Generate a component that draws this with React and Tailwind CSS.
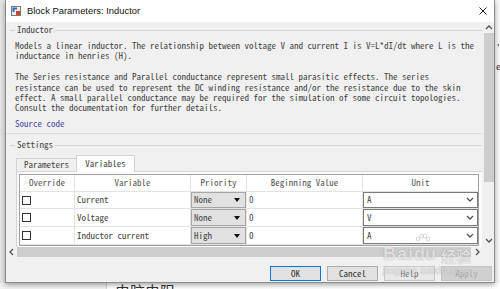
import React from 'react'

function Chevron({ dir = 'down', className = '' }) {
  const pts = {
    down: '1,2 4,5 7,2',
    up: '1,5 4,2 7,5',
    left: '5,1 2,4 5,7',
    right: '2,1 5,4 2,7',
  }[dir]
  return (
    <svg width="8" height="8" viewBox="0 0 8 8" className={className}>
      <polyline points={pts} fill="none" stroke="#505050" strokeWidth="1.3" />
    </svg>
  )
}

function GroupHeader({ title }) {
  return (
    <div className="flex items-center h-[10px]">
      <span className="ml-[4px] w-[5px] h-px bg-[#d6d6d6]" />
      <span className="px-[2px] leading-[10px]">{title}</span>
      <span className="flex-1 mr-[2px] h-px bg-[#d6d6d6]" />
    </div>
  )
}

function Checkbox() {
  return <span className="block w-[9px] h-[9px] border border-[#333] bg-white" />
}

function PriorityBox({ value }) {
  return (
    <div className="h-full w-full flex items-center justify-between border border-[#a6a6a6] bg-[#e1e1e1] pl-[2px] pr-[5px]">
      <span>{value}</span>
      <svg width="6" height="4" viewBox="0 0 6 4">
        <polygon points="0,0 6,0 3,4" fill="#111" />
      </svg>
    </div>
  )
}

function UnitBox({ value }) {
  return (
    <div className="h-full w-full flex items-center justify-between border border-[#7a7a7a] bg-white pl-[3px] pr-[3px]">
      <span>{value}</span>
      <Chevron dir="down" />
    </div>
  )
}

const rows = [
  { name: 'Current', prio: 'None', unit: 'A', h: 'h-[17px]' },
  { name: 'Voltage', prio: 'None', unit: 'V', h: 'h-[18px]' },
  { name: 'Inductor current', prio: 'High', unit: 'A', h: 'h-[18px]' },
]

function VarTable() {
  const cols = 'grid grid-cols-[55px_116px_56px_116px_115px]'
  return (
    <div className="w-[460px] border border-[#a0a0a0] bg-white">
      <div className={`${cols} h-[17px] border-b border-[#e3e3e3] text-[#555]`}>
        {['Override', 'Variable', 'Priority', 'Beginning Value', 'Unit'].map((h, i) => (
          <div key={h} className={`flex items-center justify-center ${i < 4 ? 'border-r border-[#e3e3e3]' : ''}`}>
            {h}
          </div>
        ))}
      </div>
      {rows.map(r => (
        <div key={r.name} className={`${cols} ${r.h} border-b border-[#e3e3e3]`}>
          <div className="flex items-center pl-[2px] border-r border-[#e3e3e3]">
            <Checkbox />
          </div>
          <div className="flex items-center pl-[2px] border-r border-[#e3e3e3]">{r.name}</div>
          <div className="border-r border-[#e3e3e3]">
            <PriorityBox value={r.prio} />
          </div>
          <div className="flex items-center pl-[2px] border-r border-[#e3e3e3]">0</div>
          <div>
            <UnitBox value={r.unit} />
          </div>
        </div>
      ))}
    </div>
  )
}

function Viewport() {
  return (
    <div className="w-[478px] h-full overflow-hidden pt-[3px]">
      <GroupHeader title="Inductor" />
      <div className="mt-[6px] pl-[9px] whitespace-nowrap leading-[10.4px]">
        <p>Models a linear inductor. The relationship between voltage V and current I is V=L*dI/dt where L is the</p>
        <p>inductance in henries (H).</p>
        <p className="mt-[10.4px]">The Series resistance and Parallel conductance represent small parasitic effects. The series</p>
        <p>resistance can be used to represent the DC winding resistance and/or the resistance due to the skin</p>
        <p>effect. A small parallel conductance may be required for the simulation of some circuit topologies.</p>
        <p>Consult the documentation for further details.</p>
      </div>
      <div className="mt-[5px] pl-[9px] leading-[10.4px] text-[#4a4aa8]">Source code</div>
      <div className="mt-[4px] mr-[2px] h-px bg-[#dcdcdc]" />
      <div className="mt-[6px]">
        <GroupHeader title="Settings" />
      </div>
      <div className="mt-[5px] flex items-end h-[17px] pl-[10px] -mb-px relative z-10">
        <div className="mb-px h-[13px] w-[60px] border-t border-l border-[#d4d4d4] bg-[#f0f0f0] flex items-center justify-center">
          Parameters
        </div>
        <div className="h-[17px] w-[59px] border-t border-x border-[#d4d4d4] bg-white flex items-center justify-center">
          Variables
        </div>
      </div>
      <div className="ml-[10px] mr-[2px] border-t border-l border-[#d4d4d4] bg-[#fbfbfb] pl-[2px] pt-[2px] h-[90px]">
        <VarTable />
      </div>
    </div>
  )
}

function VScroll() {
  return (
    <div className="w-[10px] h-full bg-[#f0f0f0] flex flex-col items-center">
      <div className="h-[11px] flex items-center">
        <Chevron dir="up" />
      </div>
      <div className="w-full h-[149px] bg-[#cdcdcd]" />
      <div className="flex-1" />
      <div className="h-[12px] flex items-center">
        <Chevron dir="down" />
      </div>
    </div>
  )
}

function HScroll() {
  return (
    <div className="w-[478px] h-full bg-[#f0f0f0] flex items-center">
      <div className="w-[11px] flex justify-center">
        <Chevron dir="left" />
      </div>
      <div className="w-[454px] h-full bg-[#cdcdcd]" />
      <div className="flex-1 flex justify-center">
        <Chevron dir="right" />
      </div>
    </div>
  )
}

function Button({ children, variant }) {
  const styles = {
    ok: 'border-[#0078d7] bg-[#e1e1e1] text-[#333]',
    normal: 'border-[#adadad] bg-[#e1e1e1] text-[#333]',
    help: 'border-[#c6c6c6] bg-[#e8e8e8] text-[#777]',
    off: 'border-[#c4c4c4] bg-[#d0d0d0] text-[#a9a9a9]',
  }[variant]
  return (
    <div className={`w-[51px] h-[15px] border flex items-center justify-center ${styles}`}>
      {children}
    </div>
  )
}

function AppIcon() {
  return (
    <svg width="10" height="10" viewBox="0 0 10 10">
      <rect x="0.5" y="0.5" width="9" height="9" fill="#ececec" stroke="#7a7a7a" />
      <polygon points="1.5,1.5 6,1.5 6,3.5 3.5,3.5 3.5,6 1.5,6" fill="#2f6fc0" />
      <rect x="5" y="5" width="4" height="4" fill="#d2402a" />
    </svg>
  )
}

function Dialog() {
  return (
    <div className="relative z-10 w-[490px] flex flex-col border-x border-b border-[#8c8c8c] bg-[#f0f0f0] shadow-[0_2px_5px_rgba(0,0,0,0.35)]">
      <div className="h-[22px] bg-white flex items-center font-['Liberation_Sans',sans-serif] text-[9.4px] text-[#111]">
        <div className="ml-[5px]">
          <AppIcon />
        </div>
        <span className="ml-[6px]">Block Parameters: Inductor</span>
        <svg width="8" height="8" viewBox="0 0 8 8" className="ml-auto mr-[7px]">
          <path d="M0.5 0.5 L7.5 7.5 M7.5 0.5 L0.5 7.5" stroke="#222" strokeWidth="1" />
        </svg>
      </div>
      <div className="flex h-[225px]">
        <Viewport />
        <VScroll />
      </div>
      <div className="flex h-[10px]">
        <HScroll />
        <div className="flex-1 bg-[#f0f0f0]" />
      </div>
      <div className="flex-1 flex justify-end items-start gap-[6px] pt-[9px] pr-[2px]">
        <Button variant="ok">OK</Button>
        <Button variant="normal">Cancel</Button>
        <Button variant="help">Help</Button>
        <Button variant="off">Apply</Button>
      </div>
    </div>
  )
}

function Watermark() {
  return (
    <div className="absolute left-[383px] top-[245px] z-20 pointer-events-none text-white/75 [text-shadow:0_0_1px_rgba(0,0,0,0.4)]">
      <div className="flex items-end leading-none">
        <span className="font-['Liberation_Sans',sans-serif] font-bold text-[18px] tracking-[1px]">Bai</span>
        <span className="relative font-['Liberation_Sans',sans-serif] font-bold text-[18px]">
          <svg width="16" height="11" viewBox="0 0 16 11" className="absolute -top-[12px] left-[1px]">
            <g fill="rgba(255,255,255,0.75)" stroke="rgba(0,0,0,0.25)" strokeWidth="0.6">
              <ellipse cx="3" cy="6" rx="1.7" ry="2.2" />
              <ellipse cx="6.5" cy="3" rx="1.7" ry="2.2" />
              <ellipse cx="10" cy="3" rx="1.7" ry="2.2" />
              <ellipse cx="13" cy="6" rx="1.7" ry="2.2" />
            </g>
          </svg>
          du
        </span>
        <span className="ml-[5px] font-['Noto_Sans_CJK_SC',sans-serif] font-bold text-[15px]">经验</span>
      </div>
      <div className="mt-[3px] font-['Liberation_Sans',sans-serif] text-[10px] tracking-[0.4px] leading-none">
        jingyan.baidu.com
      </div>
    </div>
  )
}

export default function App() {
  return (
    <div className="relative w-[500px] h-[289px] overflow-hidden bg-[#f4f4f4] flex flex-col font-['Noto_Sans_Mono_CJK_SC','Liberation_Mono',monospace] text-[9px] text-[#464646]">
      <div className="flex h-[283px] shrink-0">
        <div className="w-[5px] bg-[#e4e4e4]" />
        <Dialog />
        <div className="flex-1 bg-[#f8f8f8] pl-[1px] pt-[38px] leading-[19px] text-[#4a2a2a] overflow-hidden whitespace-nowrap">
          <p>'a</p>
          <p>e]</p>
        </div>
      </div>
      <div className="flex-1 flex">
        <div className="w-[107px] bg-[#f2f2f2] border-r border-[#d8d8d8]" />
        <div className="flex-1 bg-white pl-[8px] font-['Noto_Sans_CJK_SC',sans-serif] text-[15px] leading-none text-[#333]">
          电脑电阻
        </div>
      </div>
      <Watermark />
    </div>
  )
}
